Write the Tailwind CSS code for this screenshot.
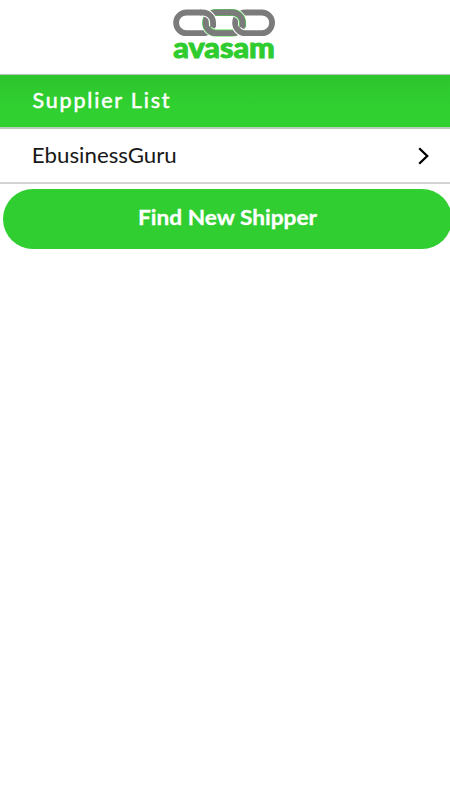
<!DOCTYPE html>
<html lang="en">
<head>
<meta charset="utf-8">
<meta name="viewport" content="width=device-width, initial-scale=1">
<title>Supplier List</title>
<script src="https://cdn.jsdelivr.net/npm/@tailwindcss/browser@4"></script>
</head>
<body class="min-h-screen overflow-x-hidden bg-white font-['Lato',sans-serif]">
<header class="flex h-[74px] justify-center">
  <svg class="h-[74px] w-[120px]" viewBox="165 0 120 74" role="img" aria-label="avasam">
    <g fill="none" stroke-width="5.8">
      <rect x="176.1" y="12.5" width="37" height="20.6" rx="10.3" stroke="#7b7b7b"/>
      <rect x="205.6" y="12.5" width="37" height="20.6" rx="10.3" stroke="white" stroke-width="8.4"/>
      <rect x="205.6" y="12.5" width="37" height="20.6" rx="10.3" stroke="#50e050" stroke-width="7"/>
      <rect x="205.6" y="12.5" width="37" height="20.6" rx="10.3" stroke="#7b7b7b"/>
      <rect x="235.1" y="12.5" width="37" height="20.6" rx="10.3" stroke="white" stroke-width="8"/>
      <rect x="235.1" y="12.5" width="37" height="20.6" rx="10.3" stroke="#7b7b7b"/>
      <path d="M231 12.5H232.3A10.3 10.3 0 0 1 242.6 22.8V26.2" stroke="white" stroke-width="8.4"/>
      <path d="M230 12.5H232.3A10.3 10.3 0 0 1 242.6 22.8V26.7" stroke="#50e050" stroke-width="7"/>
      <path d="M229 12.5H232.3A10.3 10.3 0 0 1 242.6 22.8V27.2" stroke="#7b7b7b"/>
      <path d="M201 12.5H202.8A10.3 10.3 0 0 1 213.1 22.8V26.2" stroke="white" stroke-width="8"/>
      <path d="M200 12.5H202.8A10.3 10.3 0 0 1 213.1 22.8V27.2" stroke="#7b7b7b"/>
    </g>
    <text x="173.3" y="58" font-family="Lato, sans-serif" font-weight="900" font-size="29" fill="#2fcc2f" stroke="#2fcc2f" stroke-width="1" textLength="101.5" lengthAdjust="spacingAndGlyphs">avasam</text>
  </svg>
</header>
<main>
  <h1 class="h-[55px] border-t border-b-2 border-t-[#b9c5b9] border-b-[#b9ccb9] bg-linear-to-b from-[#2dc52d] to-[#30d030] to-60% pl-[32px]">
    <svg class="h-[50px] w-[150px]" viewBox="32 75 150 50"><text x="32.5" y="107.5" font-family="Lato, sans-serif" font-weight="400" font-size="21.5" fill="white" stroke="white" stroke-width=".5" textLength="137">Supplier List</text></svg>
  </h1>
  <a class="flex h-[55px] items-center justify-between border-b-2 border-[#d3d3d5] pr-[20px] pl-[32px]">
    <svg class="h-[53px] w-[160px]" viewBox="32 129 160 53"><text x="31.8" y="163" font-family="Lato, sans-serif" font-size="21.3" fill="#181818" textLength="145" lengthAdjust="spacingAndGlyphs">EbusinessGuru</text></svg>
    <svg class="mt-px h-[18px] w-[12px]" viewBox="0 0 12 18" fill="none" stroke="#000" stroke-width="2.3"><path d="M1.2 1.2 9.2 9 1.2 16.8"/></svg>
  </a>
  <button class="mt-[5px] ml-[2.5px] block h-[59.5px] w-[449px] rounded-full bg-[#30ce30]">
    <svg class="h-[59px] w-[449px]" viewBox="2.5 189 449 59"><text x="137.5" y="225" font-family="Lato, sans-serif" font-weight="700" font-size="21.5" fill="white" stroke="white" stroke-width=".3" textLength="179" lengthAdjust="spacingAndGlyphs">Find New Shipper</text></svg>
  </button>
</main>
</body>
</html>
